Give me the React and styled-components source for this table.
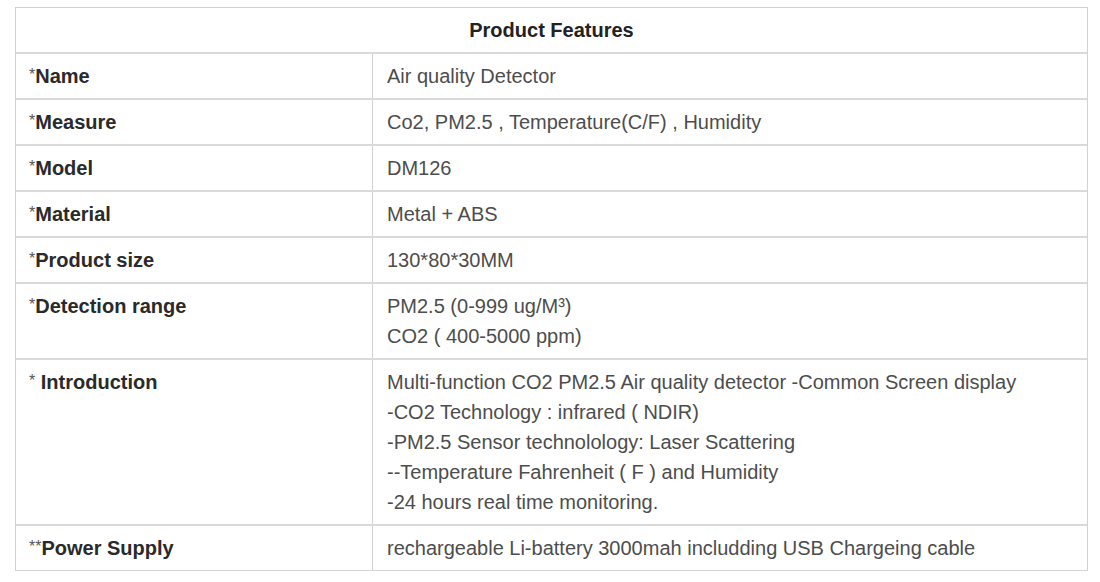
import React from "react";
import styled, { createGlobalStyle } from "styled-components";

const Global = createGlobalStyle`
  html, body { margin: 0; padding: 0; background: #fff; }
  body { font-family: "Liberation Sans", Arial, sans-serif; }
`;

const Page = styled.div`
  padding: 7px 12px 0 15px;
`;

const Table = styled.div`
  width: 1073px;
  border: 1px solid #d2d2d2;
  box-sizing: border-box;
`;

const HeaderRow = styled.div`
  height: 46px;
  display: flex;
  align-items: center;
  justify-content: center;
  border-bottom: 2px solid #dadada;
  box-sizing: border-box;
  font-size: 20px;
  font-weight: bold;
  color: #222;
`;

const Row = styled.div`
  display: grid;
  grid-template-columns: 357px 1fr;
  border-bottom: ${(p) => (p.$last ? "none" : "2px solid #dadada")};
`;

const LabelCell = styled.div`
  padding: 7px 13px;
  border-right: 1px solid #d2d2d2;
  line-height: 30px;
  font-size: 20px;
  font-weight: bold;
  color: #2a2a2a;
  display: flex;
  align-items: ${(p) => (p.$top ? "flex-start" : "center")};
  white-space: pre;
`;

const Star = styled.span`
  font-weight: normal;
  color: #555;
  font-size: 16px;
  align-self: flex-start;
  line-height: 28px;
`;

const ValueCell = styled.div`
  padding: 7px 14px;
  line-height: 30px;
  font-size: 20px;
  color: #4d4d4d;
`;

const Line = styled.div`
  white-space: nowrap;
`;

const rows = [
  { star: "*", label: "Name", lines: ["Air quality Detector"] },
  { star: "*", label: "Measure", lines: ["Co2, PM2.5 , Temperature(C/F) , Humidity"] },
  { star: "*", label: "Model", lines: ["DM126"] },
  { star: "*", label: "Material", lines: ["Metal + ABS"] },
  { star: "*", label: "Product size", lines: ["130*80*30MM"] },
  { star: "*", label: "Detection range", lines: ["PM2.5 (0-999 ug/M³)", "CO2 ( 400-5000 ppm)"] },
  {
    star: "*",
    label: " Introduction",
    lines: [
      "Multi-function CO2 PM2.5 Air quality detector -Common Screen display",
      "-CO2 Technology : infrared ( NDIR)",
      "-PM2.5 Sensor technolology: Laser Scattering",
      "--Temperature Fahrenheit ( F ) and Humidity",
      "-24 hours real time monitoring.",
    ],
  },
  { star: "**", label: "Power Supply", lines: ["rechargeable Li-battery 3000mah includding USB Chargeing cable"] },
];

export default function App() {
  return (
    <Page>
      <Global />
      <Table>
        <HeaderRow>Product Features</HeaderRow>
        {rows.map((r, i) => (
          <Row key={r.label} $last={i === rows.length - 1}>
            <LabelCell $top={r.lines.length > 1}>
              <Star>{r.star}</Star>
              {r.label}
            </LabelCell>
            <ValueCell>
              {r.lines.map((l) => (
                <Line key={l}>{l}</Line>
              ))}
            </ValueCell>
          </Row>
        ))}
      </Table>
    </Page>
  );
}
